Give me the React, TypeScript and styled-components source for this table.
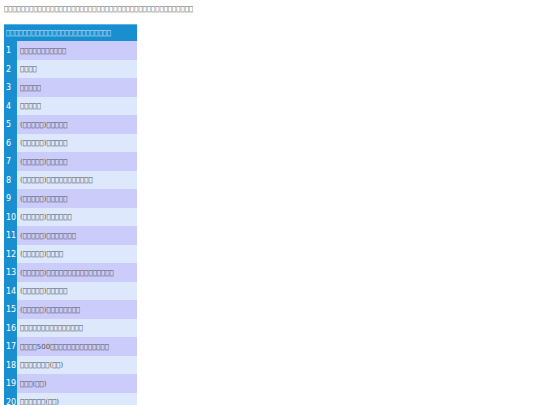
import { FC, Fragment } from 'react'
import styled, { createGlobalStyle } from 'styled-components'

// The reference shows every non-Latin character as a missing-glyph box,
// so the unreadable words are kept as private-use characters that draw the same box.
const box = (n: number) => '\ue000'.repeat(n)

const GlobalStyle = createGlobalStyle`
  html, body {
    margin: 0;
    padding: 0;
    background: #ffffff;
  }
  body {
    font-family: 'DejaVu Sans', Verdana, sans-serif;
  }
`

const Page = styled.div`
  padding: 4px 4px 0 4px;
  display: flex;
  flex-direction: column;
  gap: 9px;
`

const Title = styled.h1`
  margin: 0;
  font-size: 7px;
  font-weight: normal;
  line-height: 11px;
  color: #666666;
  white-space: nowrap;
`

const Table = styled.div`
  width: 133px;
  display: grid;
  grid-template-columns: 13px minmax(0, 1fr);
  overflow: hidden;
`

const Header = styled.div`
  grid-column: 1 / span 2;
  height: 17px;
  box-sizing: border-box;
  border-top: 1px solid #5fb4e6;
  background: #1a8fd0;
  color: #d2e8f8;
  font-size: 7px;
  display: flex;
  align-items: center;
  padding-left: 2px;
  white-space: nowrap;
`

const NumCell = styled.div`
  height: 18.5px;
  box-sizing: border-box;
  padding: 1px 0 0 2px;
  background: #1a8fd0;
  color: #ffffff;
  font-size: 8px;
  display: flex;
  align-items: center;
`

const TextCell = styled.div<{ $odd: boolean }>`
  height: 18.5px;
  box-sizing: border-box;
  padding: 1px 0 0 3px;
  background: ${({ $odd }) => ($odd ? '#ccccfb' : '#dde8fd')};
  color: #555555;
  font-size: 7px;
  display: flex;
  align-items: center;
  white-space: nowrap;
  overflow: hidden;
`

const rows: string[] = [
  box(11),
  box(4),
  box(5),
  box(5),
  `(${box(5)})${box(5)}`,
  `(${box(5)})${box(5)}`,
  `(${box(5)})${box(5)}`,
  `(${box(5)})${box(11)}`,
  `(${box(5)})${box(5)}`,
  `(${box(5)})${box(6)}`,
  `(${box(5)})${box(7)}`,
  `(${box(5)})${box(4)}`,
  `(${box(5)})${box(16)}`,
  `(${box(5)})${box(5)}`,
  `(${box(5)})${box(8)}`,
  box(15),
  `${box(4)}500${box(14)}`,
  `${box(7)}(${box(2)})`,
  `${box(3)}(${box(2)})`,
  `${box(6)}(${box(2)})`,
]

const App: FC = () => {
  return (
    <>
      <GlobalStyle />
      <Page>
        <Title>{box(45)}</Title>
        <Table>
          <Header>{box(25)}</Header>
          {rows.map((text, i) => (
            <Fragment key={i}>
              <NumCell>{i + 1}</NumCell>
              <TextCell $odd={i % 2 === 0}>{text}</TextCell>
            </Fragment>
          ))}
        </Table>
      </Page>
    </>
  )
}

export default App
